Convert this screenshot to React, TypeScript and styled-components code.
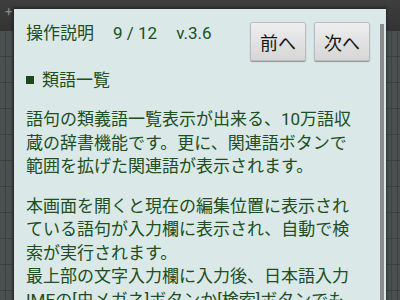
import styled, { createGlobalStyle } from 'styled-components';

const GlobalStyle = createGlobalStyle`
    html, body {
        margin: 0;
        padding: 0;
        width: 400px;
        height: 300px;
        overflow: hidden;
        background: #3a3a3a;
        font-family: Roboto, "Noto Sans CJK JP", sans-serif;
    }
`;

const Screen = styled.div`
    position: relative;
    width: 400px;
    height: 300px;
    display: flex;
    flex-direction: column;
`;

const TopBar = styled.div`
    height: 31px;
    background: linear-gradient(#3e3e3e, #333333);
    color: #8a8a8a;
    font-size: 13px;
    padding: 4px 0 0 5px;
    box-sizing: border-box;
`;

const Sheet = styled.div`
    flex: 1;
    background-color: #4a4f4f;
    background-image:
        repeating-linear-gradient(to bottom, transparent 0 25px, #3b3f3f 25px 26px),
        repeating-linear-gradient(to right, transparent 0 5px, #3d4242 5px 6px, transparent 6px 391px, #3d4242 391px 392px);
`;

const Dialog = styled.div`
    position: absolute;
    left: 13px;
    top: 8px;
    width: 373px;
    height: 320px;
    background: #dae8e8;
    border-top: 1px solid #2a2a2a;
    border-left: 1px solid #2a2a2a;
    box-shadow: 0 0 3px rgba(0, 0, 0, 0.6);
    box-sizing: border-box;
    padding: 13px 16px 0 12px;
    color: #204e20;
`;

const ScrollBar = styled.div`
    position: absolute;
    right: 2px;
    top: 15px;
    width: 4px;
    height: 300px;
    background: #8c8c8c;
`;

const Header = styled.div`
    display: flex;
    align-items: flex-start;
    justify-content: space-between;
`;

const Title = styled.div`
    display: flex;
    gap: 19px;
    font-size: 17px;
    line-height: 22px;
`;

const Buttons = styled.div`
    display: flex;
    gap: 8px;
`;

const Button = styled.button`
    width: 56px;
    height: 39px;
    padding: 0;
    border: 1px solid #bcbcbc;
    border-radius: 2px;
    background: linear-gradient(#eeeeee, #d6d6d6);
    box-shadow: 0 1px 1px rgba(0, 0, 0, 0.35);
    color: #151515;
    font-family: inherit;
    font-size: 18px;
`;

const Heading = styled.div`
    display: flex;
    align-items: center;
    gap: 8px;
    margin-top: 7px;
    font-size: 17px;
    line-height: 24px;
`;

const Square = styled.span`
    width: 8px;
    height: 8px;
    background: #1f461f;
`;

const Para = styled.p`
    margin: ${(p: { $top: number }) => p.$top}px 0 0;
    font-size: 17px;
    line-height: 23.5px;
    white-space: pre-line;
`;

export default function App() {
    return (
        <>
            <GlobalStyle />
            <Screen>
                <TopBar>+</TopBar>
                <Sheet />
                <Dialog>
                    <ScrollBar />
                    <Header>
                        <Title>
                            <span>操作説明</span>
                            <span>9 / 12</span>
                            <span>v.3.6</span>
                        </Title>
                        <Buttons>
                            <Button>前へ</Button>
                            <Button>次へ</Button>
                        </Buttons>
                    </Header>
                    <Heading>
                        <Square />
                        類語一覧
                    </Heading>
                    <Para $top={16}>
                        {'語句の類義語一覧表示が出来る、10万語収\n蔵の辞書機能です。更に、関連語ボタンで\n範囲を拡げた関連語が表示されます。'}
                    </Para>
                    <Para $top={16}>
                        {'本画面を開くと現在の編集位置に表示され\nている語句が入力欄に表示され、自動で検\n索が実行されます。\n最上部の文字入力欄に入力後、日本語入力\nIMEの[虫メガネ]ボタンか[検索]ボタンでも'}
                    </Para>
                </Dialog>
            </Screen>
        </>
    );
}
